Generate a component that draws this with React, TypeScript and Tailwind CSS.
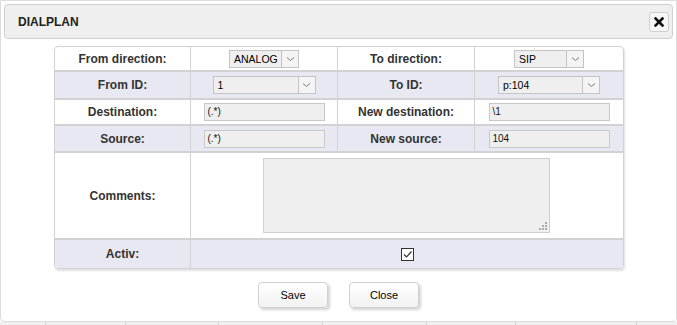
import React from 'react';

const font = { fontFamily: '"Liberation Sans", Arial, sans-serif' };

function Select({ value, width }: { value: string; width: string }) {
  return (
    <div className={`flex h-[18px] ${width} items-stretch border border-[#c4c4c4] bg-[#efefef]`}>
      <span className="flex-1 pl-[4px] text-[10.5px] leading-[16px] text-black">{value}</span>
      <span className="flex w-[17px] items-center justify-center border-l border-[#c4c4c4] bg-[#f4f4f4]">
        <svg width="9" height="6" viewBox="0 0 9 6">
          <path d="M1 1.5 L4.5 4.5 L8 1.5" fill="none" stroke="#777" strokeWidth="1" />
        </svg>
      </span>
    </div>
  );
}

function Input({ value }: { value: string }) {
  return (
    <div className="h-[18px] w-[121px] border border-[#c8c8c8] bg-[#efefef] pl-[3px] text-[10px] leading-[16px] text-[#111]">
      {value}
    </div>
  );
}

function Label({ children }: { children: React.ReactNode }) {
  return <span className="text-[12px] font-bold text-[#333]">{children}</span>;
}

export default function App() {
  const cell = 'flex items-center justify-center border-r border-[#d2d2d2]';
  return (
    <div className="flex h-[325px] w-[677px] flex-col bg-white" style={font}>
      <div className="flex h-[322px] flex-col rounded-b-[4px] border border-[#dcdcdc] p-[3px]">
        <div className="flex h-[35px] items-center justify-between rounded-[4px] border border-[#cfcfcf] bg-[#efefef] pl-[13px] pr-[3px]">
          <span className="text-[12px] font-bold text-[#222]">DIALPLAN</span>
          <button className="flex h-[20px] w-[20px] items-center justify-center rounded-[3px] border border-[#cfcfcf] bg-[#f6f6f6]">
            <svg width="10" height="10" viewBox="0 0 10 10">
              <path d="M1.5 1.5 L8.5 8.5 M8.5 1.5 L1.5 8.5" stroke="#111" strokeWidth="2.6" strokeLinecap="square" />
            </svg>
          </button>
        </div>

        <div className="ml-[50px] mt-[7px] w-[570px] overflow-hidden rounded-[4px] border border-[#d2d2d2] shadow-[1px_2px_2px_rgba(0,0,0,0.12)]">
          <div className="grid grid-cols-[136px_147px_137px_148px]">
            <div className={`${cell} h-[25px] border-b-2`}><Label>From direction:</Label></div>
            <div className={`${cell} h-[25px] border-b-2`}><Select value="ANALOG" width="w-[70px]" /></div>
            <div className={`${cell} h-[25px] border-b-2`}><Label>To direction:</Label></div>
            <div className="flex h-[25px] items-center justify-center border-b-2 border-[#d2d2d2]"><Select value="SIP" width="w-[70px]" /></div>

            <div className={`${cell} h-[28px] border-b-2 bg-[#e7e8f1]`}><Label>From ID:</Label></div>
            <div className={`${cell} h-[28px] border-b-2 bg-[#e7e8f1]`}><Select value="1" width="w-[103px]" /></div>
            <div className={`${cell} h-[28px] border-b-2 bg-[#e7e8f1]`}><Label>To ID:</Label></div>
            <div className="flex h-[28px] items-center justify-center border-b-2 border-[#d2d2d2] bg-[#e7e8f1]"><Select value="p:104" width="w-[102px]" /></div>

            <div className={`${cell} h-[26px] border-b-2`}><Label>Destination:</Label></div>
            <div className={`${cell} h-[26px] border-b-2`}><Input value="(.*)" /></div>
            <div className={`${cell} h-[26px] border-b-2`}><Label>New destination:</Label></div>
            <div className="flex h-[26px] items-center justify-center border-b-2 border-[#d2d2d2]"><Input value="\1" /></div>

            <div className={`${cell} h-[27px] border-b-2 bg-[#e7e8f1]`}><Label>Source:</Label></div>
            <div className={`${cell} h-[27px] border-b-2 bg-[#e7e8f1]`}><Input value="(.*)" /></div>
            <div className={`${cell} h-[27px] border-b-2 bg-[#e7e8f1]`}><Label>New source:</Label></div>
            <div className="flex h-[27px] items-center justify-center border-b-2 border-[#d2d2d2] bg-[#e7e8f1]"><Input value="104" /></div>

            <div className={`${cell} h-[87px] border-b-2`}><Label>Comments:</Label></div>
            <div className="col-span-3 flex h-[87px] items-center justify-center border-b-2 border-[#d2d2d2]">
              <div className="relative mr-[2px] h-[75px] w-[287px] border border-[#cfcfcf] bg-[#efefef]">
                <svg className="absolute bottom-[2px] right-[2px]" width="8" height="8" viewBox="0 0 8 8">
                  <rect x="6" y="0" width="2" height="2" fill="#aaa" />
                  <rect x="3" y="3" width="2" height="2" fill="#aaa" />
                  <rect x="6" y="3" width="2" height="2" fill="#aaa" />
                  <rect x="0" y="6" width="2" height="2" fill="#aaa" />
                  <rect x="3" y="6" width="2" height="2" fill="#aaa" />
                  <rect x="6" y="6" width="2" height="2" fill="#aaa" />
                </svg>
              </div>
            </div>

            <div className={`${cell} h-[28px] bg-[#e7e8f1]`}><Label>Activ:</Label></div>
            <div className="col-span-3 flex h-[28px] items-center justify-center bg-[#e7e8f1]">
              <span className="flex h-[13px] w-[13px] items-center justify-center border border-[#333] bg-white">
                <svg width="11" height="11" viewBox="0 0 11 11">
                  <path d="M2 5.5 L4.5 8 L9.5 2.5" fill="none" stroke="#333" strokeWidth="1.2" />
                </svg>
              </span>
            </div>
          </div>
        </div>

        <div className="mt-[13px] flex justify-center gap-[21px]">
          <button className="h-[26px] w-[70px] rounded-[4px] border border-[#d0d0d0] bg-gradient-to-b from-white to-[#f2f2f2] text-[11px] text-black shadow-[2px_2px_3px_rgba(0,0,0,0.18)]">
            Save
          </button>
          <button className="h-[26px] w-[70px] rounded-[4px] border border-[#d0d0d0] bg-gradient-to-b from-white to-[#f2f2f2] text-[11px] text-black shadow-[2px_2px_3px_rgba(0,0,0,0.18)]">
            Close
          </button>
        </div>
      </div>

      <div className="grid h-[3px] grid-cols-[46px_80px_93px_104px_104px_89px_121px_40px] bg-[#f0f0f0]">
        <div className="border-r border-[#d4d4d4]" />
        <div className="border-r border-[#d4d4d4]" />
        <div className="border-r border-[#d4d4d4]" />
        <div className="border-r border-[#d4d4d4]" />
        <div className="border-r border-[#d4d4d4]" />
        <div className="border-r border-[#d4d4d4]" />
        <div className="border-r border-[#d4d4d4]" />
        <div />
      </div>
    </div>
  );
}
